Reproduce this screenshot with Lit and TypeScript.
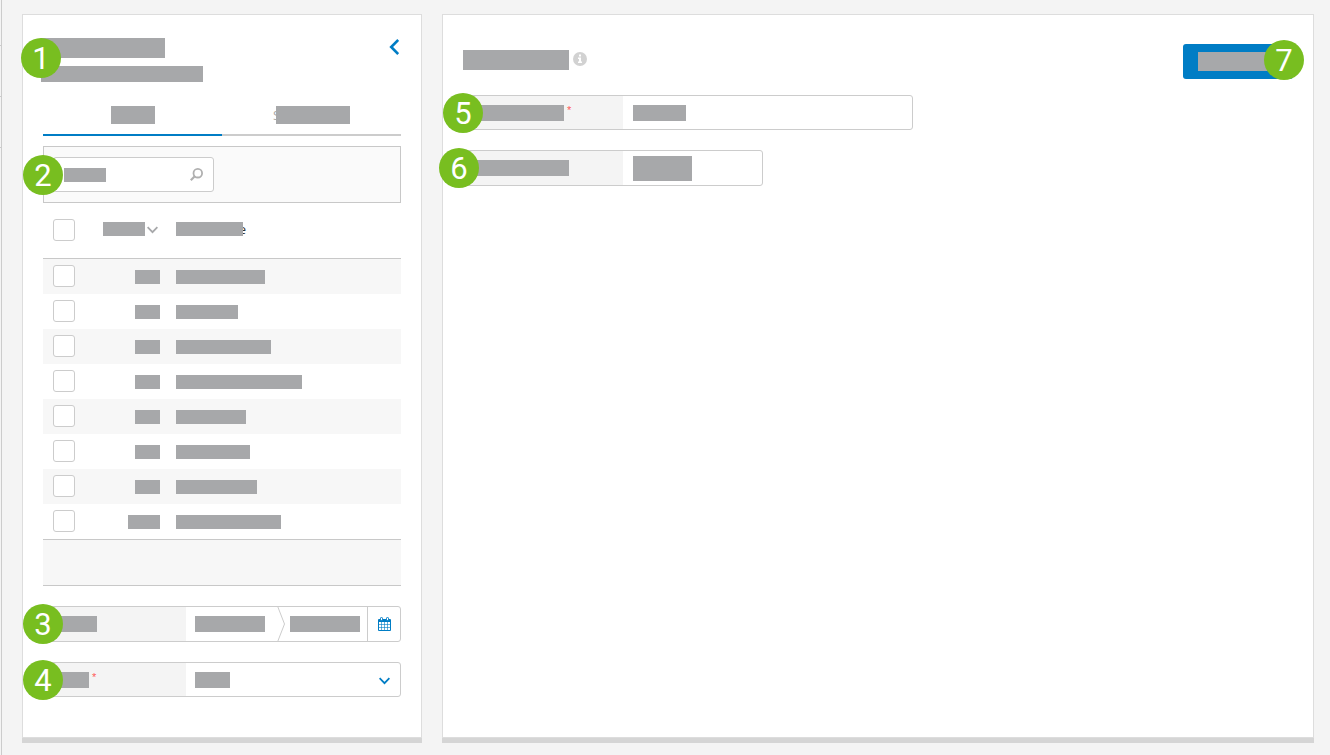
import { LitElement, html, svg, css } from "lit";
import { customElement, property } from "lit/decorators.js";

const rows = [
  { num: 25, name: 89 },
  { num: 25, name: 62 },
  { num: 25, name: 95 },
  { num: 25, name: 126 },
  { num: 25, name: 70 },
  { num: 25, name: 74 },
  { num: 25, name: 81 },
  { num: 32, name: 105 },
];

@customElement("redacted-bar")
class RedactedBar extends LitElement {
  @property({ type: Number }) w = 40;
  @property({ type: Number }) h = 16;
  static styles = css`
    :host { display: block; flex: none; position: relative; pointer-events: none; }
    .bar { display: block; background: #a7a8aa; }
  `;
  render() {
    return html`<span class="bar" style="width:${this.w}px;height:${this.h}px"></span>`;
  }
}

@customElement("step-badge")
class StepBadge extends LitElement {
  static styles = css`
    :host {
      box-sizing: border-box;
      display: flex;
      align-items: center;
      justify-content: center;
      width: 40px;
      height: 40px;
      padding-top: 2px;
      border-radius: 50%;
      background: #78be20;
      color: #fff;
      font: 31px/38px Roboto, "Liberation Sans", sans-serif;
      pointer-events: none;
    }
  `;
  render() {
    return html`<slot></slot>`;
  }
}

const chevronDown = svg`<path d="M0.6 1.2 L5.5 6.2 L10.4 1.2" fill="none" stroke="currentColor" stroke-width="1.8"/>`;

@customElement("app-root")
class AppRoot extends LitElement {
  static styles = css`
    :host {
      display: block;
      font: 13px/18px "Open Sans", "Noto Sans", sans-serif;
      color: #333;
    }
    * { box-sizing: border-box; }
    button, input, select { font: inherit; color: inherit; margin: 0; padding: 0; border: 0; background: none; border-radius: 0; }
    button { cursor: pointer; }
    svg { display: block; flex: none; }
    .page { display: flex; min-height: 100vh; background: #f4f4f4; }
    .rail { flex: none; width: 2px; border-right: 1px solid #ccc; padding-top: 45px; display: flex; flex-direction: column; gap: 50px; }
    .tick { height: 1px; background: #ccc; }
    .columns { flex: 1; min-width: 0; display: flex; gap: 20px; padding: 14px 16px 17px 20px; }
    .panel { background: #fff; border: 1px solid #ddd; box-shadow: 0 5px 0 #d5d5d5; padding: 23px 20px 40px; }
    .side { flex: none; width: 400px; }
    .main { flex: 1; min-width: 0; padding-top: 29px; }
    .anchor { position: relative; }
    .badge { position: absolute; top: 0; bottom: 0; left: -21px; margin: auto 0; z-index: 2; }
    .badge.outer { left: -25px; }
    .badge.end { left: auto; right: -11px; top: -4px; bottom: auto; }
    .badge.title { top: 0; bottom: auto; left: -20px; }

    .side-head { display: flex; justify-content: space-between; align-items: flex-start; margin-left: -2px; }
    .titles { display: flex; flex-direction: column; gap: 8px; }
    .back { color: #007dc5; padding: 1px 2px 0 0; }

    .tabs { display: flex; margin-top: 14px; }
    .tab { flex: 1; height: 40px; display: flex; align-items: center; justify-content: center; border-bottom: 2px solid #ccc; color: #aaa; }
    .tab.active { border-bottom-color: #007dc5; }
    .lead { width: 3px; white-space: nowrap; }
    .tail { width: 3px; display: flex; justify-content: flex-end; font-weight: 400; line-height: 14px; }

    .toolbar { margin-top: 10px; height: 57px; padding: 10px 9px; border: 1px solid #c8c8c8; background: #fafafa; }
    .search { display: flex; align-items: center; width: 161px; height: 35px; padding: 0 10px; border: 1px solid #ccc; border-radius: 3px; background: #fff; }
    .search input { flex: 1; min-width: 0; height: 100%; outline: none; }

    table { width: 100%; table-layout: fixed; border-collapse: separate; border-spacing: 0; }
    th, td { padding: 0; vertical-align: top; text-align: left; }
    .c-check { width: 60px; }
    .c-num { width: 65px; }
    th { height: 56px; padding-top: 19px; border-bottom: 1px solid #c8c8c8; }
    td { height: 35px; padding-top: 11px; }
    tbody tr:nth-child(odd) { background: #f7f7f7; }
    th.check { padding: 16px 0 0 10px; }
    td.check { padding: 6px 0 0 10px; }
    td.num { padding-right: 8px; }
    .name { padding-left: 8px; }
    .right { display: flex; justify-content: flex-end; }
    .sort { display: flex; align-items: center; gap: 2px; color: #a7a8aa; }
    .bars { display: flex; }
    .box { appearance: none; display: block; width: 22px; height: 22px; border: 1px solid #ccc; border-radius: 3px; background: #fff; }
    .box:checked { background: #007dc5; }
    .table-foot { height: 47px; border: solid #c8c8c8; border-width: 1px 0; background: #f7f7f7; }

    .field { position: relative; display: flex; height: 35px; margin-top: 20px; border: 1px solid #ccc; border-radius: 3px; background: #fff; }
    .field.tall { height: 36px; }
    .caption { flex: none; width: 142px; display: flex; align-items: center; gap: 3px; padding-left: 9px; background: #f4f4f4; border-radius: 2px 0 0 2px; }
    .main .caption { width: 159px; }
    .star { align-self: flex-start; color: #ff5a5a; font: 11px/29px "Liberation Sans", Arial, sans-serif; }
    .control { flex: 1; min-width: 0; display: grid; align-items: center; padding-left: 9px; }
    .control > * { grid-area: 1 / 1; }
    .control input, .control select { width: 100%; height: 100%; outline: none; appearance: none; }
    .control svg { justify-self: end; margin-right: 10px; color: #007dc5; pointer-events: none; }
    .control.slot-from { width: 91px; flex: none; }
    .control.slot-to { padding-left: 4px; }
    .calendar { flex: none; width: 33px; border-left: 1px solid #ccc; display: flex; align-items: center; justify-content: center; color: #007dc5; }

    .main-head { display: flex; justify-content: space-between; align-items: flex-start; }
    .main-title { display: flex; gap: 4px; padding-top: 6px; }
    .save { display: block; height: 35px; padding: 0 15px; border-radius: 3px; background: #007dc5; }
    .main-head + .field { margin-top: 16px; width: 450px; }
    .short { width: 300px; }
    .main .control { padding-left: 10px; }
  `;

  render() {
    return html`
      <div class="page">
        <div class="rail"><div class="tick"></div><div class="tick"></div><div class="tick"></div></div>
        <div class="columns">
          <aside class="panel side">
            <header class="side-head anchor">
              <step-badge class="badge title">1</step-badge>
              <div class="titles">
                <redacted-bar .w=${124} .h=${20}></redacted-bar>
                <redacted-bar .w=${162} .h=${16}></redacted-bar>
              </div>
              <button class="back" aria-label="Collapse">
                <svg width="10" height="16" viewBox="0 0 10 16"><path d="M9.2 1 L2.2 8 L9.2 15" fill="none" stroke="currentColor" stroke-width="2.6"/></svg>
              </button>
            </header>

            <div class="tabs" role="tablist">
              <button class="tab active" role="tab" aria-selected="true" aria-label="First tab">
                <redacted-bar .w=${44} .h=${18}></redacted-bar>
              </button>
              <button class="tab" role="tab" aria-selected="false">
                <span class="lead">S</span><redacted-bar .w=${74} .h=${18}></redacted-bar>
              </button>
            </div>

            <div class="toolbar anchor">
              <step-badge class="badge">2</step-badge>
              <label class="search">
                <redacted-bar .w=${42} .h=${14}></redacted-bar>
                <input type="text" aria-label="Search" />
                <svg width="13" height="13" viewBox="0 0 13 13"><g fill="none" stroke="#b0b0b0"><circle cx="7.8" cy="5.2" r="4.3" stroke-width="1.8"/><path d="M4.8 8.2 L0.8 12.2" stroke-width="2.2"/></g></svg>
              </label>
            </div>

            <table>
              <colgroup><col class="c-check" /><col class="c-num" /><col /></colgroup>
              <thead>
                <tr>
                  <th class="check"><input class="box" type="checkbox" aria-label="Select all" /></th>
                  <th><div class="sort"><redacted-bar .w=${42} .h=${14}></redacted-bar><svg width="11" height="10" viewBox="0 -2 11 10">${chevronDown}</svg></div></th>
                  <th class="name"><div class="bars"><redacted-bar .w=${67} .h=${14}></redacted-bar><span class="tail">e</span></div></th>
                </tr>
              </thead>
              <tbody>
                ${rows.map(
                  (r, i) => html`<tr>
                    <td class="check"><input class="box" type="checkbox" aria-label="Select row ${i + 1}" /></td>
                    <td class="num"><div class="right"><redacted-bar .w=${r.num} .h=${14}></redacted-bar></div></td>
                    <td class="name"><redacted-bar .w=${r.name} .h=${14}></redacted-bar></td>
                  </tr>`
                )}
              </tbody>
            </table>
            <div class="table-foot"></div>

            <div class="field tall">
              <step-badge class="badge">3</step-badge>
              <label class="caption" for="from"><redacted-bar .w=${44}></redacted-bar></label>
              <div class="control slot-from">
                <input id="from" type="text" aria-label="From" />
                <redacted-bar .w=${70}></redacted-bar>
              </div>
              <svg width="9" height="34" viewBox="0 0 9 34"><path d="M0.5 -1 L7.5 17 L0.5 35" fill="none" stroke="#ccc"/></svg>
              <div class="control slot-to">
                <input id="to" type="text" aria-label="To" />
                <redacted-bar .w=${70}></redacted-bar>
              </div>
              <button class="calendar" aria-label="Open calendar">
                <svg width="13" height="14" viewBox="0 0 13 14">
                  <path d="M0.5 5V13.5H12.5V5" fill="none" stroke="currentColor"/>
                  <path d="M3.5 5V13M6.5 5V13M9.5 5V13M1 7.5H12M1 10.5H12" fill="none" stroke="currentColor" opacity="0.6"/>
                  <path d="M0 3Q0 2 1 2H12Q13 2 13 3V5H0Z" fill="currentColor"/>
                  <g fill="#fff" stroke="currentColor"><rect x="2.5" y="0.5" width="2" height="3" rx="0.8"/><rect x="8.5" y="0.5" width="2" height="3" rx="0.8"/></g>
                </svg>
              </button>
            </div>

            <div class="field">
              <step-badge class="badge">4</step-badge>
              <label class="caption" for="kind"><redacted-bar .w=${36}></redacted-bar><span class="star">*</span></label>
              <div class="control">
                <select id="kind" aria-label="Type"><option></option></select>
                <redacted-bar .w=${35}></redacted-bar>
                <svg width="11" height="10" viewBox="0 -2 11 10">${chevronDown}</svg>
              </div>
            </div>
          </aside>

          <main class="panel main">
            <header class="main-head">
              <div class="main-title">
                <redacted-bar .w=${106} .h=${20}></redacted-bar>
                <svg width="14" height="18" viewBox="0 0 14 18"><circle cx="7" cy="9" r="7" fill="#d2d2d2"/><path d="M6 4.5H8V6.5H6ZM5 7.5H8V11.5H9V13H5V11.5H6V9H5Z" fill="#fff"/></svg>
              </div>
              <div class="anchor">
                <button class="save" aria-label="Save"><redacted-bar .w=${80} .h=${19}></redacted-bar></button>
                <step-badge class="badge end">7</step-badge>
              </div>
            </header>
            <div class="field">
              <step-badge class="badge">5</step-badge>
              <label class="caption" for="title"><redacted-bar .w=${91}></redacted-bar><span class="star">*</span></label>
              <div class="control">
                <input id="title" type="text" aria-label="Title" />
                <redacted-bar .w=${53}></redacted-bar>
              </div>
            </div>
            <div class="field tall short">
              <step-badge class="badge outer">6</step-badge>
              <label class="caption" for="detail"><redacted-bar .w=${96}></redacted-bar></label>
              <div class="control">
                <input id="detail" type="text" aria-label="Detail" />
                <redacted-bar .w=${59} .h=${25}></redacted-bar>
              </div>
            </div>
          </main>
        </div>
      </div>
    `;
  }
}
